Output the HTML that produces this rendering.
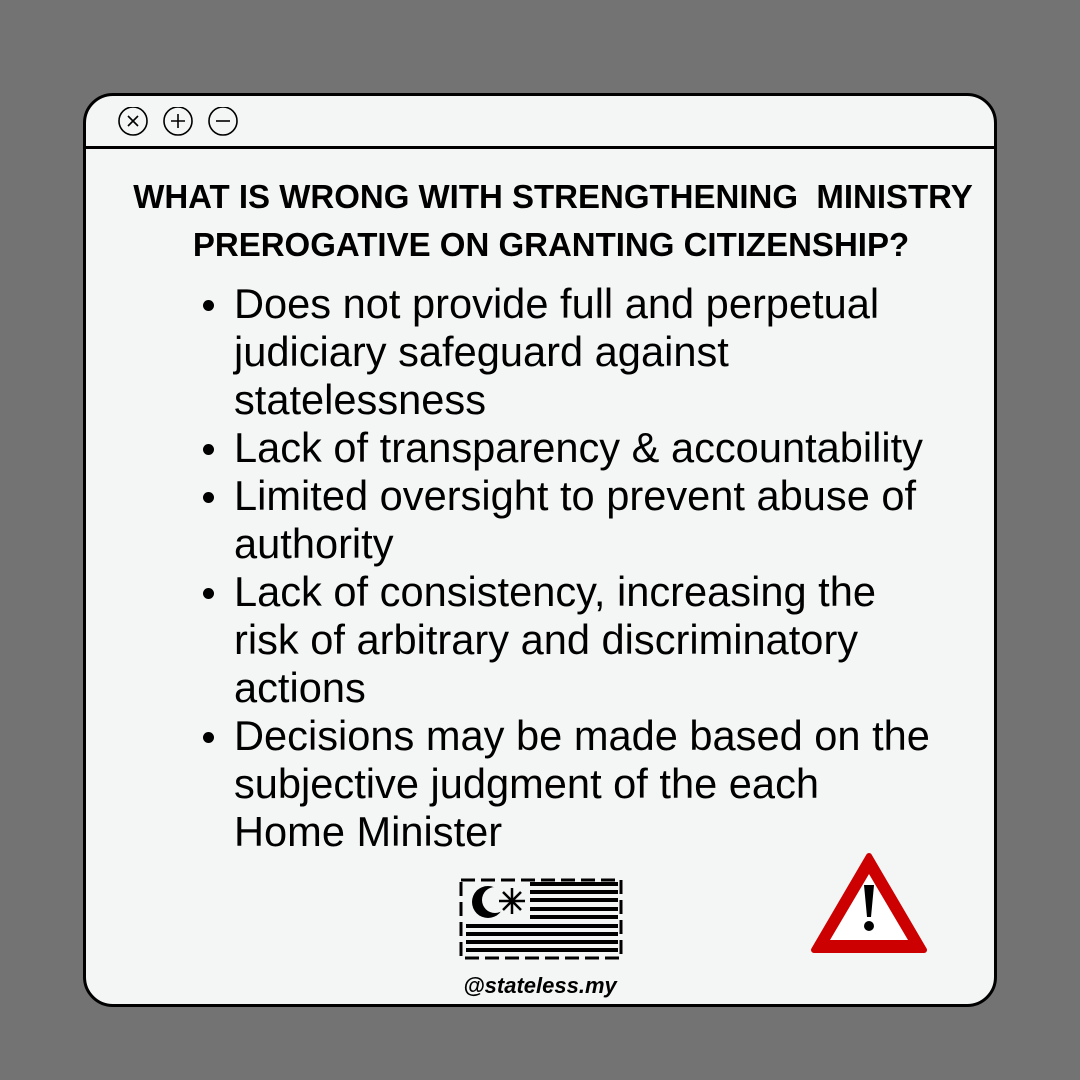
<!DOCTYPE html>
<html><head><meta charset="utf-8"><style>
html,body{margin:0;padding:0}
body{width:1080px;height:1080px;background:#737373;position:relative;overflow:hidden;font-family:"Liberation Sans",sans-serif}
.card{position:absolute;left:83px;top:93px;width:908px;height:908px;background:#f4f6f5;border:3px solid #000;border-radius:30px;}
.bar{position:absolute;left:0;right:0;top:50px;height:3px;background:#000}
.title{position:absolute;left:0;width:934px;text-align:center;font-weight:bold;font-size:33px;color:#000;white-space:nowrap;line-height:48px}
ul{position:absolute;left:148px;top:184px;margin:0;padding:0;list-style:none;font-size:41.6px;line-height:48px;color:#000;white-space:nowrap}
li{position:relative}
li:before{content:"";position:absolute;left:-31px;top:20px;width:11px;height:11px;border-radius:50%;background:#000}
.handle{position:absolute;left:0;width:908px;text-align:center;top:877px;font-weight:bold;font-style:italic;font-size:22px}
</style></head><body>
<div class="card">
<svg style="position:absolute;left:30px;top:11px" width="130" height="32" viewBox="0 0 130 32">
<g fill="none" stroke="#000" stroke-width="1.6">
<circle cx="17" cy="14" r="14"/><path d="M12 9l10 10M22 9l-10 10"/>
<circle cx="62" cy="14" r="14"/><path d="M62 7v14M55 14h14"/>
<circle cx="107" cy="14" r="14"/><path d="M100 14h14"/>
</g></svg>
<div class="bar"></div>
<div class="title" style="top:77px">WHAT IS WRONG WITH STRENGTHENING&nbsp; MINISTRY</div>
<div class="title" style="top:125px;left:-2px">PREROGATIVE ON GRANTING CITIZENSHIP?</div>
<ul>
<li>Does not provide full and perpetual<br>judiciary safeguard against<br>statelessness</li>
<li>Lack of transparency &amp; accountability</li>
<li>Limited oversight to prevent abuse of<br>authority</li>
<li>Lack of consistency, increasing the<br>risk of arbitrary and discriminatory<br>actions</li>
<li>Decisions may be made based on the<br>subjective judgment of the each<br>Home Minister</li>
</ul>
<svg style="position:absolute;left:372px;top:780px" width="168" height="88" viewBox="0 0 168 88">
<g stroke="#000" stroke-width="3" fill="none" stroke-dasharray="14 6">
<rect x="3" y="4" width="160" height="78"/>
</g>
<g stroke="#000" stroke-width="4" fill="none">
<path d="M72 8h88M72 16h88M72 24h88M72 33h88M72 41h88M8 50h152M8 58h152M8 66h152M8 74h152"/>
</g>
<circle cx="30" cy="26" r="16" fill="#000"/><circle cx="37" cy="24" r="13" fill="#f4f6f5"/>
<g stroke="#000" stroke-width="2.5"><path d="M54 12v26M41 25h26M45 16l18 18M63 16l-18 18"/></g>
</svg>
<svg style="position:absolute;left:724px;top:756px" width="118" height="102" viewBox="0 0 118 102">
<path d="M59 4L114 98H4Z" fill="#c00" stroke="#c00" stroke-width="6" stroke-linejoin="round"/>
<path d="M59 22L98 88H20Z" fill="#fff"/>
<path d="M54 33h10l-3 32h-4z" fill="#000"/><circle cx="59" cy="74" r="5" fill="#000"/>
</svg>
<div class="handle">@stateless.my</div>
</div>
</body></html>
